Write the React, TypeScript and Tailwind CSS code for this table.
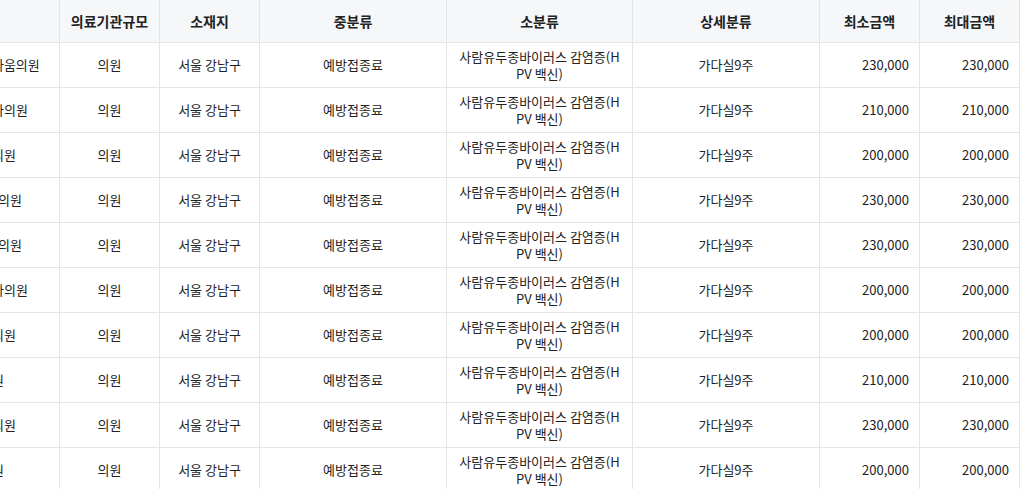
import React from "react";

type Row = {
  name: string;
  size: string;
  region: string;
  mid: string;
  sub: string;
  detail: string;
  min: string;
  max: string;
};

const names = [
  "강남역엘아름다움의원",
  "강남연세하나의원",
  "강남밝은의원",
  "강남차여성의원",
  "청담봄여성의원",
  "가로수길하나의원",
  "역삼미소의원",
  "미즈의원",
  "청담제일의원",
  "봄빛의원",
];

const prices = [
  "230,000",
  "210,000",
  "200,000",
  "230,000",
  "230,000",
  "200,000",
  "200,000",
  "210,000",
  "230,000",
  "200,000",
];

const rows: Row[] = names.map((name, i) => ({
  name,
  size: "의원",
  region: "서울 강남구",
  mid: "예방접종료",
  sub: "사람유두종바이러스 감염증(HPV 백신)",
  detail: "가다실9주",
  min: prices[i],
  max: prices[i],
}));

const cell = "flex shrink-0 items-center border-r border-[#e3e5e8]";

const App = () => {
  return (
    <div
      className="w-[1020px] h-[489px] overflow-hidden bg-white text-[#222]"
      style={{ fontFamily: '"Noto Sans CJK KR", "Noto Sans", sans-serif' }}
    >
      <div className="-ml-[99px] flex w-[1119px] flex-col">
        <div className="flex h-[43px] border-b border-[#e3e5e8] bg-[#f6f7f9] text-[14px] font-bold">
          <div className={`${cell} w-[159px] justify-center`}>기관명</div>
          <div className={`${cell} w-[100px] justify-center`}>의료기관규모</div>
          <div className={`${cell} w-[100px] justify-center`}>소재지</div>
          <div className={`${cell} w-[187px] justify-center`}>중분류</div>
          <div className={`${cell} w-[186px] justify-center`}>소분류</div>
          <div className={`${cell} w-[187px] justify-center`}>상세분류</div>
          <div className={`${cell} w-[100px] justify-center`}>최소금액</div>
          <div className={`${cell} w-[100px] justify-center`}>최대금액</div>
        </div>
        {rows.map((r, i) => (
          <div
            key={i}
            className="flex h-[45px] border-b border-[#e3e5e8] text-[13px]"
          >
            <div className={`${cell} w-[159px] justify-center whitespace-nowrap`}>
              {r.name}
            </div>
            <div className={`${cell} w-[100px] justify-center`}>{r.size}</div>
            <div className={`${cell} w-[100px] justify-center`}>{r.region}</div>
            <div className={`${cell} w-[187px] justify-center`}>{r.mid}</div>
            <div
              className={`${cell} w-[186px] justify-center px-[10px] text-center leading-[17px] break-all`}
            >
              {r.sub}
            </div>
            <div className={`${cell} w-[187px] justify-center`}>{r.detail}</div>
            <div className={`${cell} w-[100px] justify-end pr-[10px]`}>
              {r.min}
            </div>
            <div className={`${cell} w-[100px] justify-end pr-[10px]`}>
              {r.max}
            </div>
          </div>
        ))}
      </div>
    </div>
  );
};

export default App;
